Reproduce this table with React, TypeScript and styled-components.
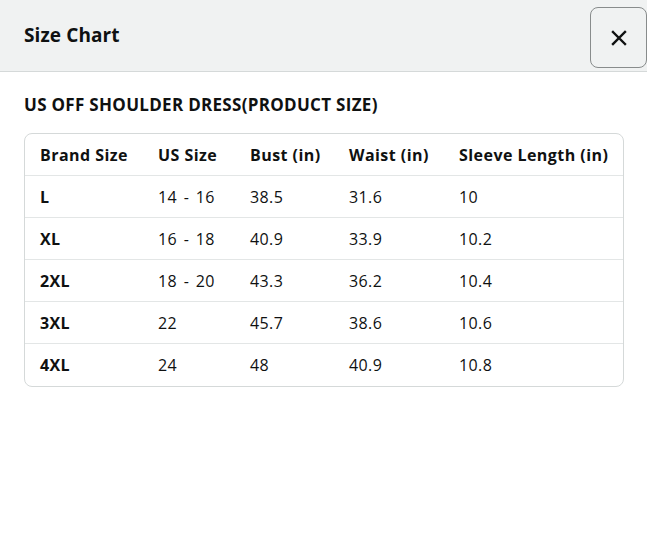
import React from "react";
import styled, { createGlobalStyle } from "styled-components";

const Global = createGlobalStyle`
  html, body { margin: 0; padding: 0; background: #fff; }
  body { font-family: "Open Sans", "Noto Sans", Arial, sans-serif; color: #0f1111; }
`;

const Page = styled.div`
  width: 647px;
  height: 548px;
  overflow: hidden;
  display: flex;
  flex-direction: column;
`;

const Header = styled.header`
  height: 72px;
  flex: none;
  background: #f0f2f2;
  border-bottom: 1px solid #d5d9d9;
  display: flex;
  align-items: center;
  justify-content: space-between;
  padding-left: 24px;
  box-sizing: border-box;
`;

const Title = styled.h1`
  margin: 0;
  font-size: 19px;
  font-weight: 700;
  line-height: 24px;
  margin-top: -1px;
  letter-spacing: 0.1px;
`;

const CloseButton = styled.button`
  width: 57px;
  height: 61px;
  margin-top: 4px;
  border: 1px solid #888c8c;
  border-radius: 8px;
  background: #f0f2f2;
  display: flex;
  align-items: center;
  justify-content: center;
  padding: 0;
  color: #0f1111;
`;

const Body = styled.main`
  padding: 22px 23px 0 24px;
  display: flex;
  flex-direction: column;
  gap: 17px;
`;

const Subtitle = styled.h2`
  margin: 0;
  font-size: 17px;
  font-weight: 700;
  line-height: 22px;
  letter-spacing: 0.3px;
`;

const Table = styled.div`
  width: 600px;
  border: 1px solid #d5d9d9;
  border-radius: 8px;
  overflow: hidden;
  box-sizing: border-box;
`;

const Row = styled.div<{ $last?: boolean }>`
  display: grid;
  grid-template-columns: 118px 92px 99px 110px 1fr;
  height: 42px;
  box-sizing: border-box;
  border-bottom: ${(p) => (p.$last ? "none" : "1px solid #e3e6e6")};
`;

const Cell = styled.div<{ $bold?: boolean; $head?: boolean }>`
  display: flex;
  align-items: center;
  padding-left: 15px;
  font-size: 16px;
  letter-spacing: ${(p) => (p.$head ? "0.45px" : "0.4px")};
  word-spacing: ${(p) => (p.$head ? "0" : "2px")};
  font-weight: ${(p) => (p.$bold ? 700 : 400)};
  white-space: nowrap;
`;

const headers = ["Brand Size", "US Size", "Bust (in)", "Waist (in)", "Sleeve Length (in)"];
const rows = [
  ["L", "14 - 16", "38.5", "31.6", "10"],
  ["XL", "16 - 18", "40.9", "33.9", "10.2"],
  ["2XL", "18 - 20", "43.3", "36.2", "10.4"],
  ["3XL", "22", "45.7", "38.6", "10.6"],
  ["4XL", "24", "48", "40.9", "10.8"],
];

export default function App() {
  return (
    <Page>
      <Global />
      <Header>
        <Title>Size Chart</Title>
        <CloseButton aria-label="Close">
          <svg width="18" height="18" viewBox="0 0 18 18">
            <path d="M3 3 L15 15 M15 3 L3 15" stroke="#0f1111" strokeWidth="2.4" strokeLinecap="square" />
          </svg>
        </CloseButton>
      </Header>
      <Body>
        <Subtitle>US OFF SHOULDER DRESS(PRODUCT SIZE)</Subtitle>
        <Table>
          <Row>
            {headers.map((h) => (
              <Cell key={h} $bold $head>
                {h}
              </Cell>
            ))}
          </Row>
          {rows.map((r, i) => (
            <Row key={r[0]} $last={i === rows.length - 1}>
              {r.map((c, j) => (
                <Cell key={j} $bold={j === 0}>
                  {c}
                </Cell>
              ))}
            </Row>
          ))}
        </Table>
      </Body>
    </Page>
  );
}
